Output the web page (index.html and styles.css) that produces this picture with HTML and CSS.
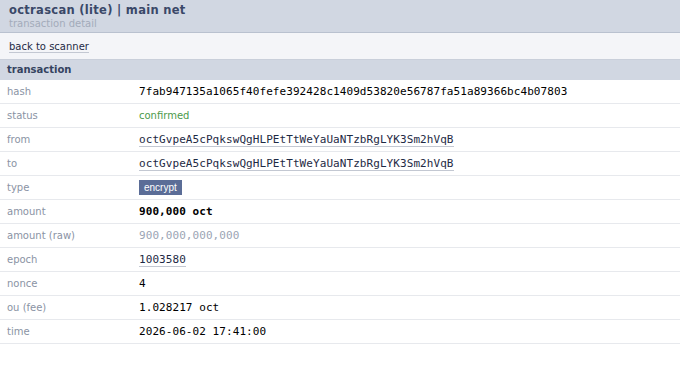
FILE: index.html
```html
<!DOCTYPE html>
<html lang="en">
<head>
    <meta charset="UTF-8">
    <meta name="viewport" content="width=device-width, initial-scale=1.0">
    <title>octrascan (lite) | transaction detail</title>
    <link rel="stylesheet" href="styles.css">
</head>
<body>
    <!-- Page header -->
    <div class="header">
        <div class="title">octrascan (lite) | main net</div>
        <div class="subtitle">transaction detail</div>
    </div>

    <div class="nav">
        <a href="#" class="link">back to scanner</a>
    </div>

    <!-- Transaction details -->
    <div class="section-title">transaction</div>
    <table class="details">
        <tr>
            <td class="label">hash</td>
            <td class="mono">7fab947135a1065f40fefe392428c1409d53820e56787fa51a89366bc4b07803</td>
        </tr>
        <tr>
            <td class="label">status</td>
            <td class="status">confirmed</td>
        </tr>
        <tr>
            <td class="label">from</td>
            <td class="mono"><a href="#" class="link">octGvpeA5cPqkswQgHLPEtTtWeYaUaNTzbRgLYK3Sm2hVqB</a></td>
        </tr>
        <tr>
            <td class="label">to</td>
            <td class="mono"><a href="#" class="link">octGvpeA5cPqkswQgHLPEtTtWeYaUaNTzbRgLYK3Sm2hVqB</a></td>
        </tr>
        <tr>
            <td class="label">type</td>
            <td><span class="badge">encrypt</span></td>
        </tr>
        <tr>
            <td class="label">amount</td>
            <td class="mono strong">900,000 oct</td>
        </tr>
        <tr>
            <td class="label">amount (raw)</td>
            <td class="mono muted">900,000,000,000</td>
        </tr>
        <tr>
            <td class="label">epoch</td>
            <td class="mono"><a href="#" class="link">1003580</a></td>
        </tr>
        <tr>
            <td class="label">nonce</td>
            <td class="mono">4</td>
        </tr>
        <tr>
            <td class="label">ou (fee)</td>
            <td class="mono">1.028217 oct</td>
        </tr>
        <tr>
            <td class="label">time</td>
            <td class="mono">2026-06-02 17:41:00</td>
        </tr>
    </table>
</body>
</html>
```

FILE: styles.css
```css
/* General styles */
body {
    font-family: "DejaVu Sans", Verdana, sans-serif;
    font-size: 10px;
    margin: 0;
    background: #fff;
    color: #000;
}

.header {
    background: #d1d7e2;
    border-bottom: 1px solid #b9c1cf;
    padding: 3px 9px 0;
    height: 33px;
    box-sizing: border-box;
}

.title {
    font-weight: bold;
    font-size: 11.5px;
    letter-spacing: 0.3px;
    color: #3a4868;
    line-height: 14px;
}

.subtitle {
    color: #a3abba;
    line-height: 12px;
    margin-top: 1px;
}

.nav {
    background: #f4f5f8;
    border-bottom: 1px solid #c9cfda;
    padding: 0 9px;
    height: 26px;
    line-height: 27px;
}

.link {
    color: #1e2a44;
    text-decoration: none;
    border-bottom: 1px solid #c3c8d2;
}

.section-title {
    background: #d1d7e2;
    color: #34435f;
    font-weight: bold;
    padding: 0 7px;
    height: 20px;
    line-height: 20px;
}

/* Detail rows */
.details {
    width: 100%;
    border-collapse: collapse;
}

.details td {
    border-bottom: 1px solid #e7e9ed;
    height: 23px;
    padding: 0;
    vertical-align: middle;
}

.details .label {
    color: #8a93a4;
    width: 132px;
    padding-left: 7px;
}

.mono {
    font-family: "DejaVu Sans Mono", monospace;
    font-size: 11px;
    letter-spacing: 0.07px;
}

.strong {
    font-weight: bold;
}

.muted {
    color: #9ba4b4;
}

.status {
    color: #4b9a4b;
}

.badge {
    display: inline-block;
    background: #5b6d97;
    color: #fff;
    font-family: "Liberation Sans", Arial, sans-serif;
    font-size: 10px;
    padding: 0 5px;
    line-height: 15px;
}
```
